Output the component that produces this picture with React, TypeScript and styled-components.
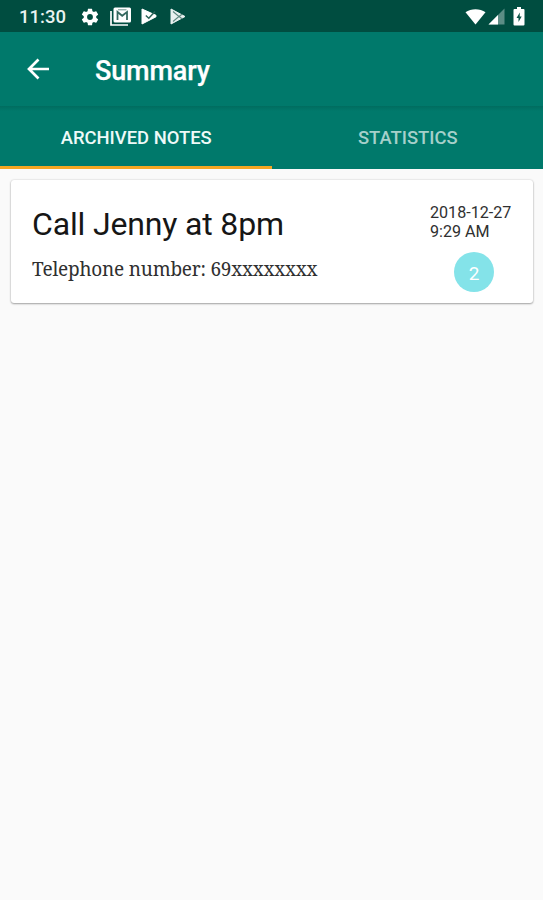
import React from 'react';
import styled, { createGlobalStyle } from 'styled-components';

const GlobalStyle = createGlobalStyle`
  * { box-sizing: border-box; }
  body { margin: 0; background: #fafafa; font-family: Roboto, "Liberation Sans", sans-serif; }
`;

const Screen = styled.div`
  display: flex;
  flex-direction: column;
  width: 543px;
  height: 900px;
  overflow: hidden;
  background: #fafafa;
`;

const StatusBar = styled.div`
  display: flex;
  align-items: center;
  justify-content: space-between;
  height: 32px;
  padding: 1px 18px 0 19px;
  background: #004d40;
  color: #fff;
`;

const StatusGroup = styled.div`
  display: flex;
  align-items: center;
  svg { display: block; }
`;

const NotificationIcons = styled(StatusGroup)`
  gap: 10px;
  margin-left: 9px;
  svg:last-child { margin-left: 3px; }
`;

const SystemIcons = styled(StatusGroup)`
  gap: 2px;
  svg:last-child { margin-left: 6px; }
`;

const Clock = styled.span`
  width: 52px;
  padding-top: 1px;
  font-size: 18.5px;
  font-weight: 500;
  line-height: 24px;
  color: #e9f3f1;
`;

const AppBar = styled.header`
  display: flex;
  align-items: center;
  height: 74px;
  padding: 0 24px;
  background: #00796b;
  color: #fff;
`;

const BackButton = styled.button`
  display: flex;
  width: 71px;
  padding: 0;
  border: 0;
  background: none;
  color: #fff;
`;

const Title = styled.h1`
  margin: 3px 0 0;
  font-size: 27px;
  font-weight: 500;
  letter-spacing: -0.15px;
  line-height: 34px;
  -webkit-text-stroke: 0.25px #fff;
`;

const Tabs = styled.nav`
  display: flex;
  height: 63px;
  background: #00796b;
  background-image: linear-gradient(#006c5f, #00796b 5px);
`;

const Tab = styled.button<{ $active?: boolean }>`
  flex: 1;
  padding: 4px 0 0 1px;
  border: 0;
  border-bottom: 3px solid ${(p) => (p.$active ? '#f5a623' : 'transparent')};
  background: none;
  color: ${(p) => (p.$active ? '#eefaf8' : '#a5d0ca')};
  font: 500 18.4px/24px Roboto, "Liberation Sans", sans-serif;
`;

const Card = styled.article`
  display: flex;
  justify-content: space-between;
  height: 123px;
  margin: 11px 10px 0 11px;
  padding: 23px 20px 0 21px;
  border-radius: 3px;
  background: #fff;
  box-shadow: 0 1px 2px rgba(0, 0, 0, 0.32), 0 0 2px rgba(0, 0, 0, 0.18);
`;

const NoteText = styled.div`
  display: flex;
  flex-direction: column;
`;

const NoteTitle = styled.h2`
  margin: 0;
  font-size: 32px;
  font-weight: 400;
  letter-spacing: -0.16px;
  line-height: 42px;
  color: #161616;
`;

const NoteBody = styled.p`
  margin: 11px 0 0;
  font-family: "Noto Serif", "DejaVu Serif Condensed", "DejaVu Serif", serif;
  font-stretch: condensed;
  font-size: 19px;
  letter-spacing: -0.22px;
  line-height: 26px;
  color: #303030;
  white-space: nowrap;
`;

const NoteMeta = styled.div`
  display: flex;
  flex-direction: column;
  width: 83px;
`;

const Stamp = styled.time`
  font-size: 16.1px;
  line-height: 19px;
  color: #303030;
  white-space: nowrap;
`;

const Badge = styled.span`
  display: flex;
  align-items: center;
  justify-content: center;
  width: 40px;
  height: 40px;
  margin: 11px 0 0 24px;
  border-radius: 50%;
  background: #84e3e9;
  color: #fff;
  font-size: 19px;
  padding-top: 2px;
`;

const GearIcon = () => (
  <svg width="20" height="20" viewBox="0 0 24 24" fill="currentColor">
    <path d="M19.43 12.98c.04-.32.07-.64.07-.98s-.03-.66-.07-.98l2.11-1.65c.19-.15.24-.42.12-.64l-2-3.46c-.12-.22-.39-.3-.61-.22l-2.49 1c-.52-.4-1.08-.73-1.69-.98l-.38-2.65A.49.49 0 0 0 14 2h-4c-.25 0-.46.18-.49.42l-.38 2.65c-.61.25-1.17.59-1.69.98l-2.49-1c-.23-.09-.49 0-.61.22l-2 3.46c-.13.22-.07.49.12.64l2.11 1.65c-.04.32-.07.65-.07.98s.03.66.07.98l-2.11 1.65c-.19.15-.24.42-.12.64l2 3.46c.12.22.39.3.61.22l2.49-1c.52.4 1.08.73 1.69.98l.38 2.65c.03.24.24.42.49.42h4c.25 0 .46-.18.49-.42l.38-2.65c.61-.25 1.17-.59 1.69-.98l2.49 1c.23.09.49 0 .61-.22l2-3.46c.12-.22.07-.49-.12-.64zM12 15.500a3.500 3.500 0 1 1 0-7 3.500 3.500 0 0 1 0 7z" />
  </svg>
);

const MailStackIcon = () => (
  <svg width="21" height="19" viewBox="0 0 21 19">
    <path d="M1 4v14h17" fill="none" stroke="#fff" strokeWidth="1.7" />
    <rect x="3.5" y="0.5" width="17.5" height="15" rx="1.5" fill="#fff" />
    <path d="M7.500 13V5l4.700 3.800L17 5v8" fill="none" stroke="#35685f" strokeWidth="1.8" />
    <path d="M8 2.800h8.500" stroke="#6e958f" strokeWidth="1" />
  </svg>
);

const PlayCheckIcon = () => (
  <svg width="16" height="17" viewBox="0 0 16 17">
    <path d="M1 1l14 6.300v1.500L1 16z" fill="#fff" stroke="#fff" strokeLinejoin="round" />
    <path d="M4.800 7.500l3 2.700L14 3.500" fill="none" stroke="#2a6258" strokeWidth="1.500" />
  </svg>
);

const PlayIcon = () => (
  <svg width="16" height="17" viewBox="0 0 16 17">
    <path d="M1 1l14 7.500L1 16z" fill="#e9f1f0" stroke="#e9f1f0" strokeLinejoin="round" />
    <path d="M3 3.500l6 5-6 5M9 8.500l3-2.200M9 8.500l3 2.200" fill="none" stroke="#5d877f" strokeWidth="1.1" />
  </svg>
);

const WifiIcon = () => (
  <svg width="21" height="17" viewBox="0 0 21 17">
    <path d="M.5 4.200C6 .2 15 .2 20.500 4.200L10.500 16.500z" fill="#fff" />
  </svg>
);

const SignalIcon = () => (
  <svg width="17" height="17" viewBox="0 0 17 17">
    <path d="M16.500 .5v16H.5z" fill="#5c8d85" />
    <path d="M10 7v9.500H.5z" fill="#fff" />
  </svg>
);

const BatteryIcon = () => (
  <svg width="12" height="19" viewBox="0 0 12 19">
    <path d="M4 0h4v2h2.500q1 0 1 1v14.500q0 1-1 1h-9q-1 0-1-1V3q0-1 1-1H4z" fill="#fff" />
    <path d="M6.800 5.500L3.500 11h2v4l3.200-5.500h-2z" fill="#0b5448" />
  </svg>
);

const ArrowIcon = () => (
  <svg width="26" height="24" viewBox="0 0 26 24" fill="none" stroke="currentColor" strokeWidth="2.700">
    <path d="M25 12H5M14.500 2.500L5 12l9.500 9.500" />
  </svg>
);

export default function App() {
  return (
    <Screen>
      <GlobalStyle />
      <StatusBar>
        <StatusGroup>
          <Clock>11:30</Clock>
          <NotificationIcons>
            <GearIcon />
            <MailStackIcon />
            <PlayCheckIcon />
            <PlayIcon />
          </NotificationIcons>
        </StatusGroup>
        <SystemIcons>
          <WifiIcon />
          <SignalIcon />
          <BatteryIcon />
        </SystemIcons>
      </StatusBar>
      <AppBar>
        <BackButton aria-label="Back"><ArrowIcon /></BackButton>
        <Title>Summary</Title>
      </AppBar>
      <Tabs>
        <Tab $active>ARCHIVED NOTES</Tab>
        <Tab>STATISTICS</Tab>
      </Tabs>
      <Card>
        <NoteText>
          <NoteTitle>Call Jenny at 8pm</NoteTitle>
          <NoteBody>Telephone number: 69xxxxxxxx</NoteBody>
        </NoteText>
        <NoteMeta>
          <Stamp>2018-12-27<br />9:29 AM</Stamp>
          <Badge>2</Badge>
        </NoteMeta>
      </Card>
    </Screen>
  );
}
